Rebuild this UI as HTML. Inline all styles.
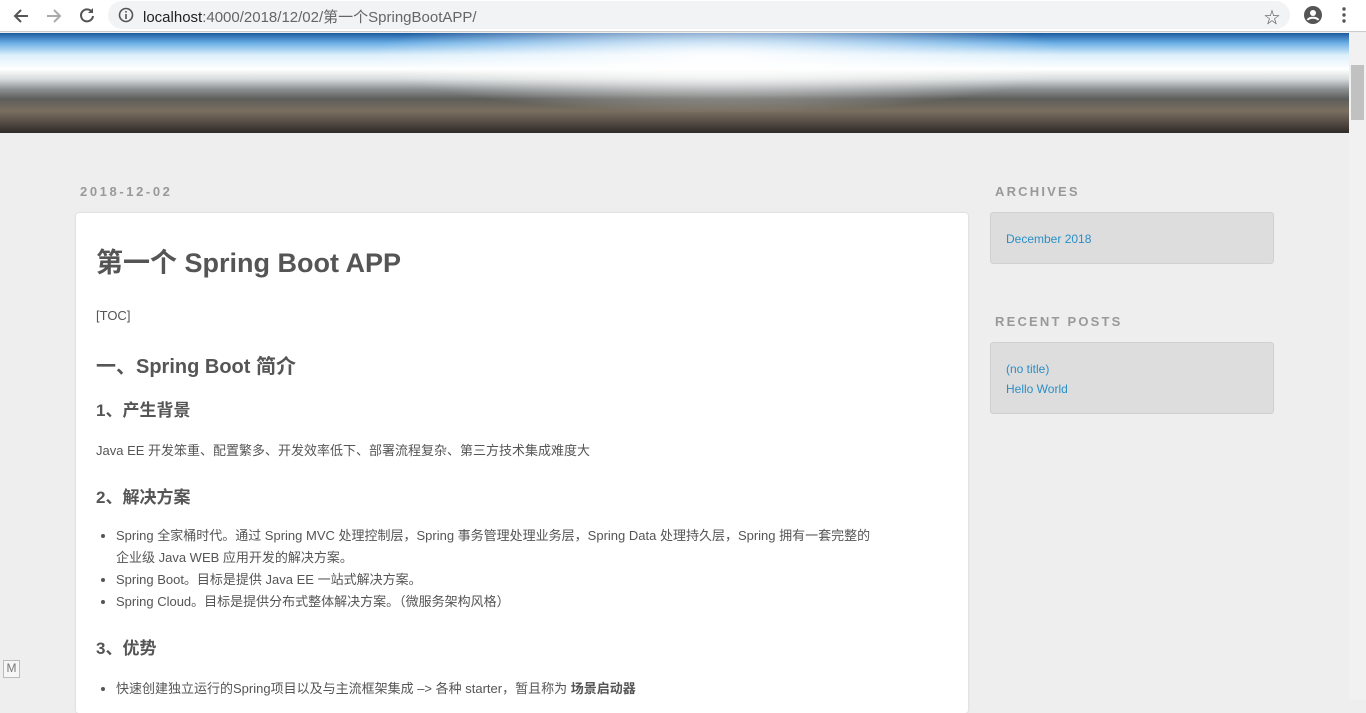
<!DOCTYPE html>
<html><head><meta charset="utf-8"><style>
*{margin:0;padding:0;box-sizing:border-box}
body{width:1366px;height:700px;overflow:hidden;background:#eee;font-family:"Liberation Sans","Noto Sans CJK SC",sans-serif;color:#555;position:relative}
.bar{position:absolute;left:0;top:0;width:1366px;height:32px;background:#fff;border-bottom:1px solid #ccc}
.url{position:absolute;left:108px;top:1px;width:1182px;height:28px;background:#f1f3f4;border-radius:14px}
.url span{position:absolute;left:35px;top:5px;font-size:15px;color:#666}
.url b{font-weight:normal;color:#222}
.banner{position:absolute;left:0;top:33px;width:1349px;height:100px;background:linear-gradient(180deg,#1c5aa0 0%,#6aaee5 10%,#dceffb 22%,#fff 36%,#d8dcdc 46%,#8e9294 56%,#5d5e5a 66%,#7a6f60 78%,#5a5048 88%,#2e2a28 100%)}
.banner:after{content:"";position:absolute;inset:0;background:radial-gradient(ellipse 350px 55px at 720px 25px,rgba(255,255,255,.95),rgba(255,255,255,0))}
.sb{position:absolute;left:1349px;top:33px;width:17px;height:667px;background:#f1f1f1}
.sb i{position:absolute;left:2px;top:32px;width:13px;height:55px;background:#c1c1c1}
.date{position:absolute;left:80px;top:184px;font-size:13px;font-weight:bold;letter-spacing:2.6px;color:#999}
.card{position:absolute;left:76px;top:213px;width:892px;height:500px;background:#fff;border-radius:3px;box-shadow:0 0 2px rgba(0,0,0,.15);padding:0 20px}
h1{position:absolute;left:20px;top:28px;font-size:27px;color:#555}
.c{position:absolute;left:20px;font-size:13px;color:#555}
h2{position:absolute;left:20px;font-size:20px;color:#555}
h3{position:absolute;left:20px;font-size:17px;color:#555}
ul{position:absolute;left:40px;font-size:13px;line-height:22px;width:812px}
.side{position:absolute;left:995px;font-size:13px;font-weight:bold;letter-spacing:2.2px;color:#999}
.box{position:absolute;left:990px;width:284px;background:#ddd;border:1px solid #d0d0d0;border-radius:3px;padding:0 15px;font-size:12px;color:#2a8fc7;line-height:20px}
.m{position:absolute;left:3px;top:660px;width:17px;height:18px;border:1px solid #bbb;font-size:12px;color:#777;text-align:center;background:#f6f6f6}
</style></head><body>
<div class="bar">
<svg style="position:absolute;left:12px;top:7px" width="18" height="18" viewBox="0 0 18 18"><path d="M16 9H3M9 3L3 9l6 6" stroke="#555" stroke-width="2" fill="none"/></svg>
<svg style="position:absolute;left:45px;top:7px" width="18" height="18" viewBox="0 0 18 18"><path d="M2 9h13M9 3l6 6-6 6" stroke="#aaa" stroke-width="2" fill="none"/></svg>
<svg style="position:absolute;left:78px;top:6px" width="18" height="18" viewBox="0 0 18 18"><path d="M14 6A6 6 0 1 0 15 10" stroke="#555" stroke-width="2" fill="none"/><path d="M15 2v5h-5z" fill="#555"/></svg>
<div class="url"><svg style="position:absolute;left:10px;top:6px" width="16" height="16" viewBox="0 0 16 16"><circle cx="8" cy="8" r="6.5" stroke="#555" stroke-width="1.6" fill="none"/><rect x="7.2" y="7" width="1.6" height="5" fill="#555"/><rect x="7.2" y="4" width="1.6" height="1.6" fill="#555"/></svg><span><b>localhost</b>:4000/2018/12/02/第一个SpringBootAPP/</span>
<span style="left:1156px;top:3px;font-size:16px;color:#555">☆</span></div>
<svg style="position:absolute;left:1303px;top:5px" width="20" height="20" viewBox="0 0 20 20"><circle cx="10" cy="10" r="9" fill="#555"/><circle cx="10" cy="8" r="3" fill="#fff"/><path d="M4.5 15c2-3 9-3 11 0" stroke="#fff" stroke-width="2" fill="none"/></svg>
<svg style="position:absolute;left:1341px;top:7px" width="6" height="18"><circle cx="3" cy="2" r="1.7" fill="#555"/><circle cx="3" cy="8" r="1.7" fill="#555"/><circle cx="3" cy="14" r="1.7" fill="#555"/></svg>
</div>
<div class="banner"></div>
<div class="sb"><i></i></div>
<div class="date">2018-12-02</div>
<div class="card">
<h1>第一个 Spring Boot APP</h1>
<div class="c" style="top:95px">[TOC]</div>
<h2 style="top:137px">一、Spring Boot 简介</h2>
<h3 style="top:183px">1、产生背景</h3>
<div class="c" style="top:227px">Java EE 开发笨重、配置繁多、开发效率低下、部署流程复杂、第三方技术集成难度大</div>
<h3 style="top:270px">2、解决方案</h3>
<ul style="top:312px"><li>Spring 全家桶时代。通过 Spring MVC 处理控制层，Spring 事务管理处理业务层，Spring Data 处理持久层，Spring 拥有一套完整的<br>企业级 Java WEB 应用开发的解决方案。</li><li>Spring Boot。目标是提供 Java EE 一站式解决方案。</li><li>Spring Cloud。目标是提供分布式整体解决方案。（微服务架构风格）</li></ul>
<h3 style="top:421px">3、优势</h3>
<ul style="top:465px"><li>快速创建独立运行的Spring项目以及与主流框架集成 –&gt; 各种 starter，暂且称为 <b>场景启动器</b></li></ul>
</div>
<div class="side" style="top:184px">ARCHIVES</div>
<div class="box" style="top:212px;height:52px;padding-top:16px">December 2018</div>
<div class="side" style="top:314px">RECENT POSTS</div>
<div class="box" style="top:342px;height:72px;padding-top:16px">(no title)<br>Hello World</div>
<div class="m">M</div>
</body></html>
